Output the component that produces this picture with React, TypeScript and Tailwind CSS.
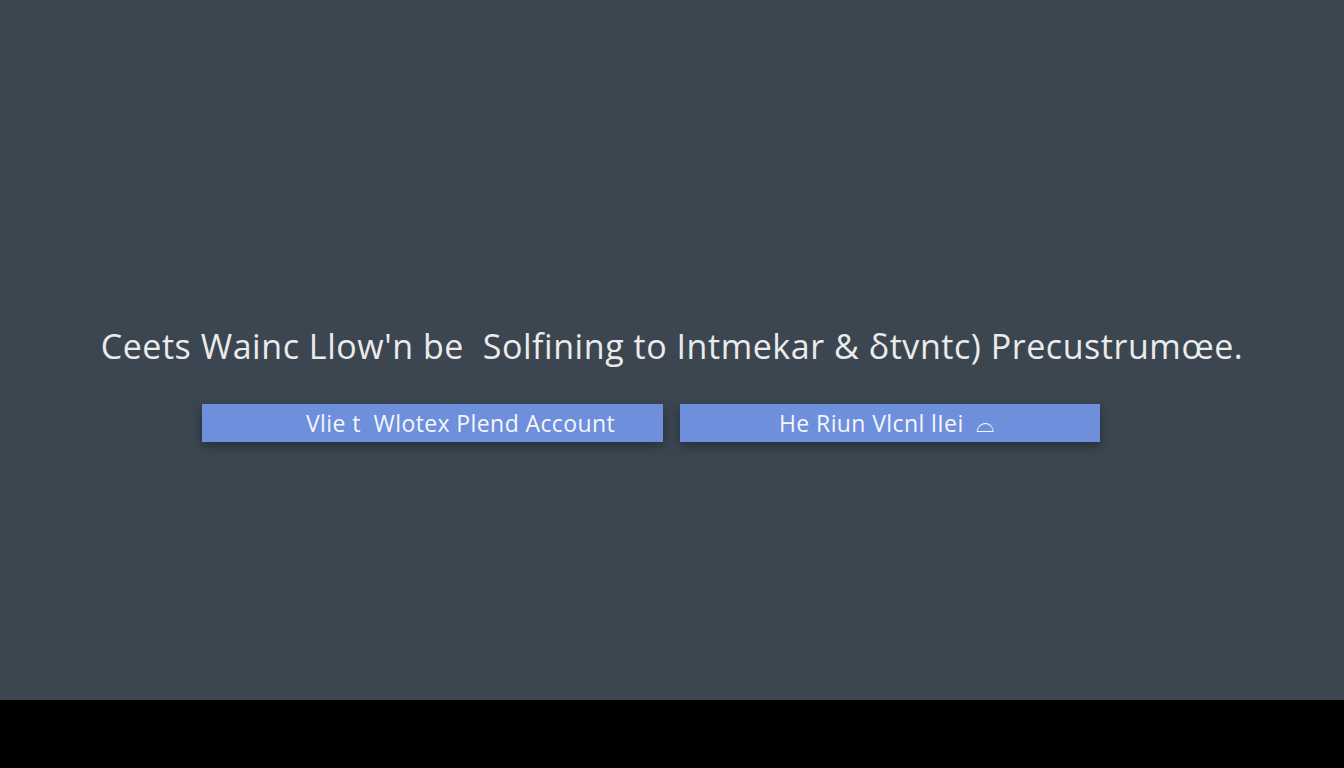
import React from "react";

export default function App() {
  return (
    <div className="w-[1344px] h-[768px] bg-black flex flex-col" style={{ fontFamily: '"Open Sans", "Noto Sans", sans-serif' }}>
      <div className="h-[700px] bg-[#3b4651] flex flex-col items-center">
        <div className="mt-[322px] text-[34px] leading-[48px] text-[#ebebeb] tracking-[0.55px] whitespace-nowrap">
          Ceets Wainc Llow'n be&nbsp; Solfining to Intmekar &amp; δtvntc) Precustrumœe.
        </div>
        <div className="mt-[34px] flex gap-[17px] ml-[-42px]">
          <div className="w-[461px] h-[38px] bg-[#6e8fdc] shadow-[0_4px_10px_rgba(0,0,0,0.35)] flex items-center pl-[104px] text-[23px] text-[#f4f6fb] tracking-[0.4px] whitespace-nowrap">
            Vlie t&nbsp; Wlotex Plend Account
          </div>
          <div className="w-[420px] h-[38px] bg-[#6e8fdc] shadow-[0_4px_10px_rgba(0,0,0,0.35)] flex items-center pl-[99px] text-[23px] text-[#f4f6fb] tracking-[0.4px] whitespace-nowrap">
            He Riun Vlcnl lIei&nbsp; ⌓
          </div>
        </div>
      </div>
      <div className="flex-1 bg-black" />
    </div>
  );
}
